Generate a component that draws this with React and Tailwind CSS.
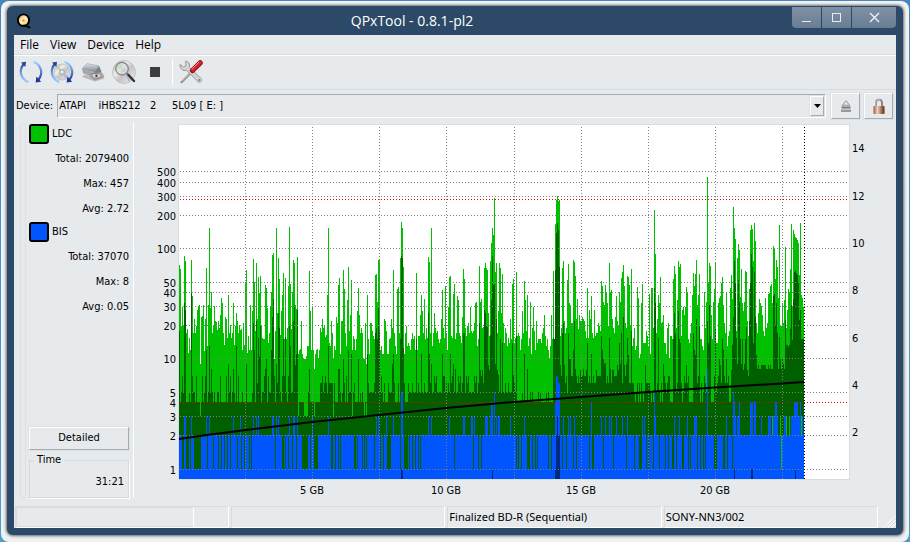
import { useState } from 'react'

const plotWidth = 671
const plotHeight = 354
const plotX = 43
const plotY = 3

// top edge of every LDC column, in plot pixels from the top
const ldcMax = [
  140, 144, 201, 182, 201, 131, 136, 208, 204, 228, 213, 225, 135, 171, 208, 194, 208, 201, 185, 181,
  180, 239, 192, 191, 180, 226, 194, 143, 221, 180, 103, 183, 167, 208, 201, 181, 196, 197, 205, 196,
  203, 190, 173, 178, 208, 220, 192, 194, 213, 170, 208, 200, 213, 208, 178, 220, 201, 188, 196, 208,
  200, 205, 204, 225, 198, 220, 157, 145, 228, 211, 225, 180, 225, 186, 134, 157, 206, 138, 194, 152,
  168, 151, 201, 213, 214, 214, 160, 163, 183, 218, 208, 181, 167, 130, 128, 234, 206, 103, 188, 133,
  154, 210, 186, 170, 148, 214, 153, 214, 203, 161, 102, 159, 204, 167, 135, 138, 180, 184, 132, 229,
  225, 224, 196, 229, 234, 234, 234, 231, 221, 221, 146, 186, 225, 182, 225, 244, 229, 225, 224, 234,
  225, 203, 207, 194, 203, 201, 212, 210, 170, 103, 218, 221, 196, 208, 234, 221, 225, 192, 198, 160,
  153, 229, 196, 196, 145, 164, 208, 221, 175, 142, 206, 190, 155, 225, 211, 214, 225, 214, 186, 163,
  190, 208, 203, 208, 234, 234, 198, 239, 170, 214, 229, 198, 198, 206, 211, 214, 150, 149, 177, 135,
  135, 225, 221, 229, 229, 194, 196, 206, 229, 229, 214, 213, 194, 203, 145, 208, 221, 229, 164, 162,
  208, 133, 97, 103, 142, 229, 208, 201, 221, 218, 221, 225, 214, 208, 214, 211, 225, 148, 225, 211,
  211, 190, 170, 186, 208, 174, 214, 203, 213, 132, 137, 208, 103, 221, 208, 188, 203, 208, 206, 214,
  218, 214, 194, 165, 203, 213, 161, 208, 225, 182, 152, 151, 211, 213, 169, 159, 214, 208, 171, 175,
  208, 211, 218, 192, 144, 154, 203, 211, 201, 198, 208, 182, 206, 208, 206, 198, 178, 177, 221, 214,
  141, 177, 174, 203, 202, 143, 138, 143, 145, 188, 211, 136, 118, 103, 110, 73, 147, 138, 208, 186,
  138, 143, 188, 149, 198, 218, 203, 208, 221, 213, 218, 194, 214, 159, 154, 218, 213, 147, 211, 208,
  211, 225, 214, 186, 208, 156, 175, 206, 170, 221, 213, 177, 229, 203, 182, 206, 225, 196, 218, 214,
  214, 214, 218, 208, 203, 190, 211, 221, 214, 225, 234, 221, 190, 214, 146, 214, 99, 75, 71, 76,
  75, 211, 203, 143, 136, 196, 208, 203, 155, 139, 178, 180, 198, 198, 135, 137, 151, 194, 174, 204,
  190, 196, 196, 192, 194, 196, 206, 213, 163, 213, 185, 194, 171, 208, 213, 185, 211, 208, 208, 198,
  201, 206, 156, 161, 177, 180, 160, 167, 178, 201, 138, 167, 165, 194, 203, 208, 192, 171, 196, 201,
  167, 177, 153, 147, 140, 161, 198, 203, 151, 152, 160, 201, 144, 221, 213, 203, 225, 221, 162, 173,
  234, 229, 178, 159, 218, 218, 218, 206, 211, 221, 169, 229, 163, 163, 203, 85, 129, 208, 194, 170,
  178, 152, 198, 197, 190, 218, 218, 229, 203, 198, 234, 211, 211, 214, 154, 141, 149, 203, 175, 136,
  142, 139, 211, 185, 182, 190, 182, 162, 167, 214, 218, 208, 198, 170, 148, 161, 149, 135, 180, 170,
  149, 214, 214, 221, 225, 167, 203, 177, 52, 157, 138, 141, 190, 214, 177, 164, 138, 218, 218, 178,
  173, 171, 158, 152, 180, 198, 208, 168, 221, 211, 206, 163, 150, 174, 82, 103, 114, 206, 133, 119,
  125, 172, 144, 178, 186, 177, 146, 147, 196, 211, 164, 105, 100, 104, 136, 98, 116, 198, 208, 188,
  174, 178, 181, 190, 206, 211, 173, 203, 198, 169, 168, 161, 159, 178, 121, 124, 154, 135, 142, 173,
  100, 201, 201, 178, 198, 175, 122, 203, 185, 164, 167, 144, 99, 182, 105, 109, 112, 113, 115, 118,
  150, 98, 170, 173, 182,
]

const ldcAvgPeaks = {
  0: 206, 3: 251, 5: 178, 6: 185, 12: 168, 13: 251, 26: 251, 27: 225, 30: 221, 32: 244, 49: 239, 51: 251,
  54: 244, 57: 221, 59: 251, 67: 239, 74: 198, 75: 225, 77: 196, 79: 213, 80: 232, 81: 201, 86: 244, 87: 234,
  92: 225, 93: 192, 94: 174, 97: 239, 99: 188, 100: 203, 103: 251, 104: 214, 106: 212, 110: 201, 111: 221,
  114: 196, 115: 180, 116: 240, 117: 229, 118: 185, 130: 244, 143: 251, 149: 221, 159: 244, 160: 244,
  164: 234, 167: 251, 169: 225, 172: 229, 179: 234, 188: 229, 196: 208, 197: 203, 198: 214, 199: 183,
  200: 205, 202: 251, 213: 239, 214: 229, 221: 214, 222: 131, 223: 133, 224: 223, 237: 214, 242: 229,
  249: 188, 250: 229, 252: 239, 263: 229, 264: 251, 271: 229, 274: 239, 276: 244, 284: 208, 285: 208,
  300: 198, 305: 185, 306: 188, 307: 200, 308: 202, 309: 240, 311: 210, 312: 175, 313: 131, 314: 160,
  315: 159, 316: 239, 317: 194, 319: 250, 321: 214, 323: 218, 333: 218, 334: 250, 337: 211, 345: 229,
  348: 244, 374: 213, 375: 200, 376: 145, 377: 108, 378: 98, 379: 105, 380: 142, 381: 240, 383: 208,
  384: 198, 385: 240, 389: 208, 390: 234, 391: 234, 394: 225, 395: 196, 396: 244, 404: 244, 408: 218,
  412: 229, 422: 211, 423: 225, 424: 234, 426: 238, 430: 213, 431: 244, 434: 245, 438: 240, 440: 218,
  442: 208, 444: 192, 445: 240, 448: 213, 449: 230, 452: 206, 466: 240, 475: 163, 476: 178, 479: 213,
  484: 239, 490: 251, 494: 214, 495: 188, 496: 208, 499: 186, 500: 214, 501: 218, 507: 240, 514: 208,
  515: 225, 516: 230, 517: 194, 520: 201, 528: 196, 529: 218, 530: 180, 531: 211, 536: 203, 540: 234,
  541: 240, 543: 214, 544: 225, 547: 234, 553: 220, 554: 192, 555: 136, 556: 157, 557: 213, 559: 155,
  560: 177, 561: 214, 563: 214, 566: 214, 567: 202, 570: 196, 571: 157, 572: 129, 573: 142, 574: 218,
  575: 147, 576: 192, 577: 230, 594: 171, 595: 169, 596: 200, 597: 178, 598: 208, 600: 212, 606: 195,
  609: 222, 611: 204, 612: 180, 613: 215, 614: 174, 615: 147, 616: 145, 617: 148, 618: 150, 619: 158,
  620: 195, 621: 185, 622: 214, 623: 214, 624: 214,
}

const ldcAvgDips = [21, 119, 125, 126, 127, 128, 135, 154, 173, 185, 187]

// [until column, possible floor heights]
const ldcAvgFloors = [
  [14, [277, 277, 267, 277]],
  [60, [277, 267, 267, 258, 277, 251]],
  [74, [277, 267, 277, 277]],
  [118, [267, 258, 267, 251, 277]],
  [141, [277, 277, 277, 267]],
  [154, [267, 258, 251]],
  [232, [277, 277, 267, 258, 277]],
  [254, [267, 267, 258]],
  [300, [258, 251, 267, 251]],
  [320, [258, 245, 251]],
  [337, [267, 267, 258]],
  [376, [277, 267, 277, 267]],
  [400, [267, 251, 258]],
  [422, [258, 258, 251, 245]],
  [450, [258, 239, 251, 245]],
  [474, [277, 267, 258, 267]],
  [552, [267, 258, 277, 251, 258]],
  [577, [245, 239, 251]],
  [596, [244, 240, 244]],
  [606, [239, 234, 244]],
  [625, [225, 220, 218]],
]

const bisGaps = [
  [3, 2], [7, 3], [11, 1], [15, 7], [28, 1], [34, 1], [39, 1], [42, 1], [45, 1], [48, 1], [51, 1], [58, 1],
  [62, 1], [65, 1], [70, 1], [72, 1], [96, 1], [103, 2], [106, 1], [109, 1], [113, 2], [117, 1], [123, 6],
  [131, 1], [135, 4], [152, 2], [156, 1], [159, 1], [161, 1], [175, 2], [178, 1], [183, 1], [185, 1],
  [187, 1], [195, 1], [199, 1], [201, 1], [204, 1], [208, 4], [221, 1], [225, 4], [230, 1], [233, 1],
  [236, 1], [239, 1], [241, 1], [275, 1], [294, 1], [299, 1], [302, 1], [337, 1], [339, 1], [342, 1],
  [348, 3], [353, 1], [356, 1], [358, 1], [369, 1], [372, 1], [383, 1], [387, 1], [394, 1], [397, 1],
  [410, 1], [413, 2], [424, 1], [434, 1], [447, 1], [455, 1], [460, 3], [467, 1], [469, 1], [474, 1],
  [480, 1], [486, 1], [489, 1], [493, 2], [497, 1], [503, 2], [509, 1], [511, 1], [518, 1], [521, 1],
  [524, 1], [526, 1], [535, 2], [537, 1], [544, 2], [548, 1], [553, 1],
]

// [column, columns, top]
const bisPeaks = [
  [5, 2, 291], [12, 1, 291], [27, 1, 291], [30, 1, 291], [54, 1, 291], [61, 1, 291], [74, 1, 291],
  [77, 1, 291], [79, 1, 291], [93, 2, 291], [97, 1, 291], [99, 1, 291], [110, 1, 291], [114, 2, 291],
  [118, 1, 291], [133, 1, 291], [149, 1, 291], [197, 1, 291], [199, 1, 291], [207, 1, 291],
  [214, 1, 291], [222, 2, 267], [249, 1, 291], [252, 1, 291], [270, 1, 291], [284, 2, 291],
  [292, 2, 291], [295, 1, 291], [306, 3, 291], [311, 1, 291], [312, 2, 277], [315, 1, 267],
  [317, 1, 291], [319, 2, 291], [331, 1, 291], [345, 1, 291], [376, 1, 277], [377, 2, 251],
  [379, 2, 258], [384, 1, 291], [389, 1, 291], [391, 1, 291], [395, 1, 291], [412, 1, 277],
  [422, 1, 291], [426, 1, 291], [430, 1, 291], [432, 1, 291], [437, 1, 291], [443, 1, 291],
  [448, 1, 291], [463, 1, 291], [465, 1, 291], [475, 1, 267], [476, 1, 291], [495, 1, 291],
  [500, 1, 291], [508, 1, 291], [515, 3, 291], [528, 1, 244], [547, 1, 291], [554, 1, 267],
  [555, 1, 277], [556, 1, 291], [558, 1, 291], [559, 1, 291], [560, 1, 277], [571, 3, 277],
  [575, 2, 277], [582, 1, 291], [589, 3, 291], [594, 2, 291], [596, 2, 277], [598, 1, 291],
  [605, 2, 291], [612, 3, 291], [615, 4, 277], [619, 2, 291], [621, 1, 277], [623, 1, 291],
]

const bisAvg = [
  [222, 2, 344], [313, 1, 344], [376, 1, 344], [377, 1, 310], [378, 1, 291], [379, 2, 310],
  [555, 1, 344], [572, 2, 344], [616, 1, 344],
]

const ldcStripes = [
  [593, 1, 291, 310], [601, 1, 291, 310], [602, 1, 310, 344], [607, 1, 291, 310], [610, 1, 291, 310],
  [622, 1, 291, 310],
]

const levels = [
  [500, 46], [400, 57], [300, 71], [200, 90], [100, 123], [50, 157], [40, 167], [30, 181], [20, 200],
  [10, 233], [5, 267], [4, 277], [3, 291], [2, 310], [1, 344],
]

const speeds = [[14, 23], [12, 71], [10, 118], [8, 165], [6, 213], [4, 260], [2, 307]]
const sizes = [['5 GB', 133], ['10 GB', 267], ['15 GB', 402], ['20 GB', 536]]
const gridColumns = [66, 133, 200, 267, 335, 402, 469, 536, 603]

const bar = (x, width, top, bottom = plotHeight) => `M${x} ${top}h${width}V${bottom}h${-width}z`

const floorAt = (column) => {
  if (ldcAvgDips.includes(column)) return 291
  const steps = ldcAvgFloors.find(([until]) => column < until)[1]
  return steps[(column * 7 + ((column * column) >> 3)) % steps.length]
}

const ldcPath = ldcMax.map((top, i) => bar(i, 1, top)).join('')
const ldcAvgPath = ldcMax.map((top, i) => bar(i, 1, Math.max(top, ldcAvgPeaks[i] ?? floorAt(i)))).join('')
const spans = (list) => list.map(([x, width, top, bottom]) => bar(x, width, top, bottom)).join('')

function Chart() {
  return (
    <svg
      viewBox="0 0 760 380"
      className="block w-full font-['DejaVu_Sans_Condensed','DejaVu_Sans',sans-serif] text-[11px]"
      role="img"
      aria-label="LDC / BIS"
    >
      <rect x={plotX - 1} y={plotY - 1} width={plotWidth + 1} height={plotHeight + 2} fill="#d9dde0" />
      <rect x={plotX} y={plotY} width={plotWidth - 1} height={plotHeight} fill="#fff" />
      <g transform={`translate(${plotX} ${plotY})`}>
        <g shapeRendering="crispEdges">
          <path d={ldcPath} fill="#00c000" />
          <path d={ldcAvgPath} fill="#006000" />
          <path d={bar(0, 625, 310)} fill="#0055ff" />
          <path d={bisGaps.map(([x, width]) => bar(x, width, 310, 344)).join('')} fill="#006000" />
          <path d={spans(bisPeaks)} fill="#0055ff" />
          <path d={spans(bisAvg)} fill="#002a80" />
          <path d={spans(ldcStripes)} fill="#00c000" />
          <g stroke="#808080" strokeDasharray="1 2">
            {levels.map(([value, y]) =>
              value === 4 ? null : <line key={value} x1="1" x2={plotWidth - 1} y1={y + 0.5} y2={y + 0.5} />
            )}
            {gridColumns.map((x) => (
              <line key={x} x1={x + 0.5} x2={x + 0.5} y1="2" y2={plotHeight} />
            ))}
          </g>
          <g stroke="#f00000" strokeDasharray="1 2">
            <line x1="1" x2={plotWidth - 1} y1="74.5" y2="74.5" />
            <line x1="1" x2={plotWidth - 1} y1="277.5" y2="277.5" />
          </g>
          <line x1="625.5" x2="625.5" y1="2" y2={plotHeight} stroke="#000" strokeDasharray="1 2" />
        </g>
        <path
          d="M0 314L24 310.5L67 305L133 297L200 290L267 283L335 277L402 272L469 267L536 262.5L603 258.5L625 257"
          fill="none"
          stroke="#000"
          strokeWidth="2"
        />
        {levels.map(([value, y]) => (
          <text key={value} x="-3" y={y + 5} textAnchor="end">{value}</text>
        ))}
        {speeds.map(([value, y]) => (
          <text key={value} x="673" y={y + 4}>{value}</text>
        ))}
        {sizes.map(([label, x]) => (
          <text key={label} x={x} y="369" textAnchor="middle">{label}</text>
        ))}
      </g>
    </svg>
  )
}

function Gradients() {
  return (
    <svg width="0" height="0" className="absolute" aria-hidden="true">
      <defs>
        <linearGradient id="arcLeft" x1="0" y1="1" x2="0" y2="0">
          <stop offset="0" stopColor="#9fd0fa" />
          <stop offset="0.5" stopColor="#6fa3e0" />
          <stop offset="1" stopColor="#2b4596" />
        </linearGradient>
        <linearGradient id="arcRight" x1="0" y1="0" x2="0" y2="1">
          <stop offset="0" stopColor="#a6d4fa" />
          <stop offset="0.5" stopColor="#5b8bd4" />
          <stop offset="1" stopColor="#1f3a94" />
        </linearGradient>
        <linearGradient id="disc" x1="0" y1="0" x2="1" y2="1">
          <stop offset="0" stopColor="#a8a8a8" />
          <stop offset="0.35" stopColor="#efefef" />
          <stop offset="0.55" stopColor="#c4c4c4" />
          <stop offset="1" stopColor="#f4f4f4" />
        </linearGradient>
        <linearGradient id="metal" x1="0" y1="0" x2="0" y2="1">
          <stop offset="0" stopColor="#dfe3ec" />
          <stop offset="1" stopColor="#7f858f" />
        </linearGradient>
        <linearGradient id="brass" x1="0" y1="0" x2="1" y2="0">
          <stop offset="0" stopColor="#9a5a3c" />
          <stop offset="0.35" stopColor="#f0d2be" />
          <stop offset="1" stopColor="#5e2a14" />
        </linearGradient>
        <linearGradient id="gold" x1="0" y1="0" x2="1" y2="1">
          <stop offset="0" stopColor="#f0a020" />
          <stop offset="0.5" stopColor="#fff3c8" />
          <stop offset="1" stopColor="#f2b040" />
        </linearGradient>
      </defs>
    </svg>
  )
}

function Arrows() {
  return (
    <g fill="none" strokeWidth="2.2">
      <path d="M9.5 22.3C3.8 20.5.5 14 2.3 8.5C2.8 6.7 3.6 5.3 4.8 4" stroke="url(#arcLeft)" />
      <path d="M14.5 1.7C20.2 3.5 23.5 10 21.7 15.5C21.2 17.3 20.4 18.7 19.2 20" stroke="url(#arcRight)" />
      <path d="M2 2.4L7 1.8L6.4 7z" fill="#2b4596" />
      <path d="M22.2 21.8L16.6 22.4L17.4 16.6z" fill="#1f3a94" />
    </g>
  )
}

function Disc({ r = 8.5 }) {
  return (
    <g>
      <circle cx="12" cy="12" r={r} fill="url(#disc)" stroke="#b4b4b4" strokeWidth="0.7" />
      <path d={`M12 12L${12 - r * 0.8} ${12 - r * 0.5}A${r} ${r} 0 0 1 ${12 - r * 0.4} ${12 - r * 0.85}z`} fill="#b9d9b0" />
      <path d={`M12 12L${12 + r * 0.8} ${12 + r * 0.5}A${r} ${r} 0 0 1 ${12 + r * 0.4} ${12 + r * 0.85}z`} fill="#b7b7d6" />
      <circle cx="12" cy="12" r="2.6" fill="#cfcfcf" stroke="#999" strokeWidth="0.6" />
      <circle cx="12" cy="12" r="1.1" fill="#f4f4f4" />
    </g>
  )
}

function ToolButton({ label, children }) {
  return (
    <button type="button" aria-label={label} title={label} className="flex h-8 w-[31px] items-center justify-center">
      <svg width="24" height="24" viewBox="0 0 24 24">{children}</svg>
    </button>
  )
}

function Toolbar() {
  return (
    <div className="flex items-center border-b border-b-[#d8dcdf] pb-px">
      <ToolButton label="Rescan bus">
        <Arrows />
      </ToolButton>
      <ToolButton label="Update media info">
        <Disc r={8} />
        <Arrows />
      </ToolButton>
      <ToolButton label="Device info">
        <path d="M1 17L3 15L22 16.5L23.5 18.5L14 21.5z" fill="#b9b9b9" />
        <path d="M6 3.5L18 6L13.5 12L1 9z" fill="url(#metal)" stroke="#8b9099" strokeWidth="0.5" />
        <path d="M1 9L13.5 12L13 17L2.2 13.5z" fill="#a3a7ae" />
        <path d="M18 6L20.5 11.5L13 17L13.5 12z" fill="#7b8089" />
        <path d="M8 14.5L20 12L23 16.5L13 20z" fill="#b2b0b0" stroke="#858585" strokeWidth="0.6" />
        <ellipse cx="15.5" cy="15.7" rx="4.6" ry="2.3" fill="#ddd3d3" stroke="#666" strokeWidth="0.6" />
        <circle cx="15.5" cy="15.7" r="1.2" fill="#4c4242" />
      </ToolButton>
      <ToolButton label="Start test">
        <Disc r={11.4} />
        <circle cx="10" cy="8.7" r="6.3" fill="#d8dde0" fillOpacity="0.8" stroke="#868686" strokeWidth="1.3" />
        <path d="M6 8A4.5 4.5 0 0 1 10 4.3L10 8z" fill="#bfe3b4" />
        <path d="M10 9L14 10A4 4 0 0 1 11 12.8z" fill="#d6c3dc" />
        <path d="M14.7 13.3L17 15.2" stroke="#777" strokeWidth="1.8" />
        <path d="M16.5 15L22 21" stroke="#333" strokeWidth="2.4" strokeLinecap="round" />
      </ToolButton>
      <ToolButton label="Stop test">
        <rect x="7" y="7" width="10" height="10" fill="#3c3e3d" />
      </ToolButton>
      <div className="mx-[2px] h-[26px] w-px bg-white" />
      <ToolButton label="Preferences">
        <path d="M2.5 22.2L12.5 12" stroke="#858585" strokeWidth="2.2" strokeLinecap="round" />
        <path d="M2.5 21.8L12.5 11.6" stroke="#c9c9c9" strokeWidth="1" />
        <path
          d="M1 4.5L4.5 7L7 5.5L6.6 1.2C9.5 1.2 11.3 4 10.3 7L22 18.5C23.8 20.5 21.3 23.5 19 21.7L7.6 10.3C4.2 11.6.6 8.6 1 4.5z"
          fill="#d2d2d2"
          stroke="#888"
          strokeWidth="0.8"
        />
        <circle cx="20.2" cy="20" r="0.9" fill="#777" />
        <path d="M13.5 10.5L21.2 2.8" stroke="#8d1016" strokeWidth="5.2" strokeLinecap="round" />
        <path d="M13.7 10.1L21.2 2.6" stroke="#d8232b" strokeWidth="3.6" strokeLinecap="round" />
        <path d="M13.2 8.8L19.8 2.3" stroke="#f29a9c" strokeWidth="0.9" strokeLinecap="round" />
      </ToolButton>
    </div>
  )
}

function Stats({ name, swatch, rows }) {
  return (
    <section>
      <div className="mb-[3px] flex items-center gap-[3px]">
        <span className={`h-5 w-5 rounded-[3px] border-2 border-black ${swatch}`} />
        <span>{name}</span>
      </div>
      {rows.map((row) => (
        <p key={row} className="h-[25px] text-right leading-6">{row}</p>
      ))}
    </section>
  )
}

const raised = 'border border-t-white border-l-white border-r-[#a3acb2] border-b-[#a3acb2] shadow-[0_0_0_1px_#dde1e4]'
const statusCell = 'h-[22px] border border-t-[#d8dcdf] border-l-[#d8dcdf] border-r-white border-b-white pl-px leading-[20px]'
const captionButton = 'flex h-[21px] items-center justify-center bg-linear-to-b from-[#8191a4] to-[#687d94]'

export default function App() {
  const [device, setDevice] = useState('E:')

  return (
    <div className="flex min-h-screen bg-linear-to-b from-[#4586bd] to-[#4f9cc4] p-px font-['DejaVu_Sans_Condensed','DejaVu_Sans',sans-serif] text-[11px] text-black">
      <Gradients />
      <div className="flex grow rounded-lg bg-linear-to-b from-[#f4f4f4] to-[#f0f1f2] px-[6px] pt-[5px] pb-[7px]">
        <div className="flex grow flex-col rounded-md bg-[#2c4a68] px-[7px] pb-[7px] shadow-[0_0_3px_1px_#5b6670]">
          <header className="flex h-[29px] items-start">
            <svg width="16" height="16" viewBox="0 0 16 16" aria-hidden="true" className="mt-[7px] ml-[2px]">
              <ellipse cx="7.5" cy="7.2" rx="5.6" ry="5.8" fill="url(#gold)" stroke="#000" strokeWidth="1.9" />
              <circle cx="7.5" cy="7.5" r="1.2" fill="#d99a3a" />
              <path d="M8 12.6Q10.500 13 13.500 14.300" stroke="#000" strokeWidth="2" strokeLinecap="round" fill="none" />
            </svg>
            <h1 className="flex-1 pt-[5px] text-center font-['Open_Sans','Noto_Sans',sans-serif] text-[14px] leading-5 text-white">
              QPxTool - 0.8.1-pl2
            </h1>
            <div className="flex justify-end gap-px pt-px">
              <button type="button" aria-label="Minimize" className={`${captionButton} w-[29px] rounded-bl`}>
                <svg width="11" height="11" viewBox="0 0 11 11"><path d="M1 9.5H10" stroke="#e8edf2" /></svg>
              </button>
              <button type="button" aria-label="Maximize" className={`${captionButton} w-[29px]`}>
                <svg width="11" height="11" viewBox="0 0 11 11">
                  <rect x="1.5" y="1.5" width="8" height="8" fill="none" stroke="#e8edf2" />
                </svg>
              </button>
              <button type="button" aria-label="Close" className={`${captionButton} w-11 rounded-br`}>
                <svg width="11" height="11" viewBox="0 0 11 11">
                  <path d="M1 1L10 10M10 1L1 10" stroke="#f2f5f8" strokeWidth="1.3" />
                </svg>
              </button>
            </div>
          </header>

          <div className="flex grow flex-col bg-[#e6eaed]">
            <nav className="flex h-5 items-center gap-[11px] border-b border-b-[#d8dcdf] pl-[6px] font-['Open_Sans','Noto_Sans',sans-serif] text-xs">
              <button type="button">File</button>
              <button type="button">View</button>
              <button type="button">Device</button>
              <button type="button">Help</button>
            </nav>
            <div className="border-t border-t-white pl-px">
              <Toolbar />
            </div>

            <div className="flex items-center gap-1 py-[3px] pr-[3px] pl-[2px]">
              <label htmlFor="device">Device:</label>
              <div className="relative mr-px flex h-6 flex-1 border border-t-[#a3acb2] border-l-[#a3acb2] border-r-white border-b-white">
                <select
                  id="device"
                  value={device}
                  onChange={(e) => setDevice(e.target.value)}
                  className="w-full appearance-none bg-transparent pl-px whitespace-pre outline-none"
                >
                  <option value="E:">{'ATAPI\u00a0\u00a0\u00a0 iHBS212\u00a0\u00a0 2\u00a0\u00a0\u00a0\u00a0 5L09 [ E: ]'}</option>
                </select>
                <span className={`pointer-events-none absolute inset-y-px right-px flex w-[14px] items-center justify-center bg-[#e6eaed] ${raised}`}>
                  <svg width="7" height="4" viewBox="0 0 7 4"><path d="M0 0H7L3.5 4z" /></svg>
                </span>
              </div>
              <button type="button" aria-label="Eject" className={`flex h-[26px] w-[29px] items-center justify-center ${raised}`}>
                <svg width="12" height="14" viewBox="0 0 12 14">
                  <path d="M6 1.500L10 6.500H2z" fill="#bbb" stroke="#999" strokeWidth="0.7" />
                  <path d="M6 3L8 5.500H4z" fill="#eee" />
                  <rect x="1.500" y="7.500" width="9" height="2" fill="#777" />
                  <rect x="1" y="10.500" width="10" height="2.500" fill="#999" />
                </svg>
              </button>
              <button type="button" aria-label="Lock" className={`flex h-[26px] w-[29px] items-center justify-center ${raised}`}>
                <svg width="12" height="17" viewBox="0 0 12 17">
                  <path d="M3 9V5C3 .5 9 .5 9 5V9" fill="none" stroke="#8a8078" strokeWidth="1.9" />
                  <path d="M2.8 8V5C3 1.5 6 1 7.5 2.3" fill="none" stroke="#d9d4ce" strokeWidth="0.8" />
                  <rect x="0.500" y="8" width="11" height="8" rx="0.8" fill="url(#brass)" />
                </svg>
              </button>
            </div>

            <main className="flex grow">
              <aside className="mb-1 ml-[6px] flex w-[114px] shrink-0 gap-[3px] border-r border-r-white pt-[2px] pr-1">
                <div className="w-[6px] border border-[#dde1e4]" />
                <div className="flex flex-1 flex-col">
                  <Stats name="LDC" swatch="bg-[#00c000]" rows={['Total: 2079400', 'Max: 457', 'Avg: 2.72']} />
                  <Stats name="BIS" swatch="bg-[#0055ff]" rows={['Total: 37070', 'Max: 8', 'Avg: 0.05']} />
                  <button type="button" className={`mt-auto h-[23px] ${raised}`}>Detailed</button>
                  <fieldset className="mt-1 h-11 border border-[#d6dadd] px-1 shadow-[1px_1px_0_#fff]">
                    <legend className="px-[3px] leading-3">Time</legend>
                    <p className="pt-2 text-right leading-4">31:21</p>
                  </fieldset>
                </div>
              </aside>
              <div className="min-w-0 flex-1 pl-[2px]">
                <Chart />
              </div>
            </main>

            <footer className="flex gap-[2px] pt-1 pl-px font-['Noto_Sans','Open_Sans',sans-serif] text-[11px]">
              <div className="w-[214px] border border-t-[#d8dcdf] border-l-[#d8dcdf] border-r-white border-b-white">
                <div className="h-5 w-[178px] border border-[#d8dcdf] border-r-white" />
              </div>
              <div className={`flex-1 ${statusCell}`} />
              <div className={`flex-1 ${statusCell}`}>Finalized BD-R (Sequential)</div>
              <div className={`flex-1 ${statusCell}`}>SONY-NN3/002</div>
              <svg width="16" height="22" viewBox="0 0 16 22" aria-hidden="true">
                <path d="M4 22L16 10M8 22L16 14M12 22L16 18" stroke="#fff" strokeWidth="1.2" />
                <path d="M5 22L16 11M9 22L16 15M13 22L16 19" stroke="#c5cacd" strokeWidth="0.6" />
              </svg>
            </footer>
          </div>
        </div>
      </div>
    </div>
  )
}
